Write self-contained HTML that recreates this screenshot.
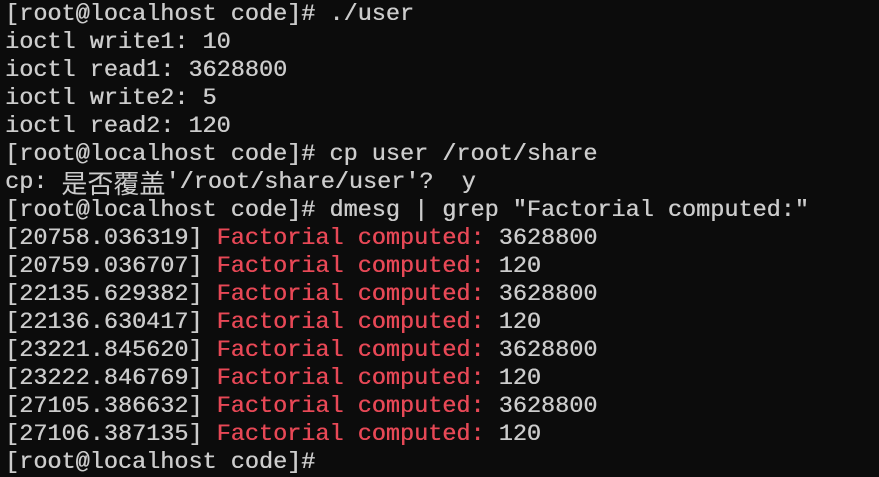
<!DOCTYPE html>
<html><head><style>
body{margin:0;background:#0c0c0c;width:879px;height:452px;overflow:hidden;position:relative}
.t{position:absolute;left:5px;top:1px;font-family:"Liberation Mono","Noto Sans CJK SC",monospace;font-size:23.5px;color:#cccccc}
.t div{height:28px;line-height:28px;white-space:pre;text-shadow:0.4px 0 0 currentColor}
.r{color:#e74856}
.c{font-family:"Noto Sans CJK SC",sans-serif;font-size:26px;line-height:28px;vertical-align:top;text-shadow:none}
</style></head><body><div class="t"><div>[root@localhost code]# ./user</div><div>ioctl write1: 10</div><div>ioctl read1: 3628800</div><div>ioctl write2: 5</div><div>ioctl read2: 120</div><div>[root@localhost code]# cp user /root/share</div><div>cp: <span class="c">是否覆盖</span>'/root/share/user'?  y</div><div>[root@localhost code]# dmesg | grep "Factorial computed:"</div><div>[20758.036319] <span class="r">Factorial computed:</span> 3628800</div><div>[20759.036707] <span class="r">Factorial computed:</span> 120</div><div>[22135.629382] <span class="r">Factorial computed:</span> 3628800</div><div>[22136.630417] <span class="r">Factorial computed:</span> 120</div><div>[23221.845620] <span class="r">Factorial computed:</span> 3628800</div><div>[23222.846769] <span class="r">Factorial computed:</span> 120</div><div>[27105.386632] <span class="r">Factorial computed:</span> 3628800</div><div>[27106.387135] <span class="r">Factorial computed:</span> 120</div><div>[root@localhost code]#</div></div></body></html>
